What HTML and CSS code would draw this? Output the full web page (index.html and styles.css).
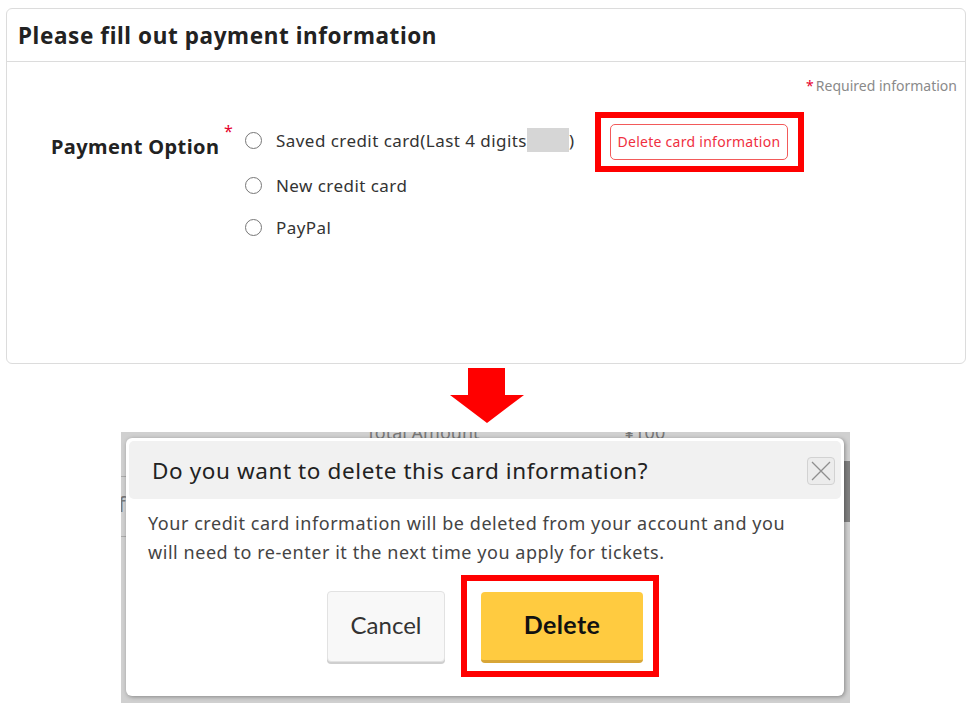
FILE: index.html
```html
<!DOCTYPE html>
<html lang="en">
<head>
<meta charset="utf-8">
<title>Payment information</title>
<link rel="stylesheet" href="styles.css">
</head>
<body>
<section class="card">
  <header class="card-head">Please fill out payment information</header>
  <div class="card-body">
    <p class="required"><span class="req-mark">*</span>Required information</p>
    <div class="field">
      <div class="field-label">Payment Option<span class="label-mark">*</span></div>
      <div class="options">
        <div class="option option-first">
          <span class="radio"></span>
          <span class="option-text">Saved credit card(Last 4 digits<span class="masked"></span>)</span>
          <span class="highlight highlight-small"><button class="btn-delete-card">Delete card information</button></span>
        </div>
        <div class="option option-second">
          <span class="radio"></span>
          <span class="option-text">New credit card</span>
        </div>
        <div class="option">
          <span class="radio"></span>
          <span class="option-text">PayPal</span>
        </div>
      </div>
    </div>
  </div>
</section>

<div class="arrow-wrap">
  <svg class="arrow" width="74" height="55" viewBox="0 0 74 55"><polygon points="18,0 55,0 55,27 74,27 37,55 0,27 18,27" fill="#ff0000"/></svg>
</div>

<div class="shot">
  <div class="bg-text bg-total">Total Amount</div>
  <div class="bg-text bg-amount">¥100</div>
  <div class="bg-line bg-line-1"></div>
  <div class="bg-line bg-line-2"></div>
  <div class="bg-letter">f</div>
  <div class="bg-scroll"></div>
  <div class="modal">
    <div class="modal-head">
      <h2 class="modal-title">Do you want to delete this card information?</h2>
      <span class="modal-close"><svg width="22" height="22" viewBox="0 0 22 22"><path d="M2 2 L20 20 M20 2 L2 20" stroke="#8f8f8f" stroke-width="1.3" fill="none"/></svg></span>
    </div>
    <p class="modal-text">Your credit card information will be deleted from your account and you will need to re-enter it the next time you apply for tickets.</p>
    <div class="modal-actions">
      <button class="btn btn-cancel">Cancel</button>
      <span class="highlight highlight-big"><button class="btn btn-delete">Delete</button></span>
    </div>
  </div>
</div>
</body>
</html>
```

FILE: styles.css
```css
* { box-sizing: border-box; }
html, body { margin: 0; padding: 0; background: #fff; }
body {
  font-family: "Noto Sans", "DejaVu Sans", sans-serif;
  color: #333;
  width: 972px;
  height: 703px;
  overflow: hidden;
}

.card {
  margin: 8px 6px 0;
  height: 356px;
  border: 1px solid #dcdcdc;
  border-radius: 6px;
}
.card-head {
  height: 53px;
  display: flex;
  align-items: center;
  padding-left: 11px;
  font-size: 22.5px;
  letter-spacing: 0.6px;
  font-weight: 700;
  color: #222;
  border-bottom: 1px solid #dcdcdc;
}
.card-body { padding: 14px 8px 0 44px; }
.required {
  margin: 0;
  text-align: right;
  font-size: 14px;
  color: #8a8a8a;
  line-height: 20px;
}
.req-mark { color: #e6002d; margin-right: 2px; }

.field { display: flex; margin-top: 26px; }
.field-label {
  position: relative;
  width: 194px;
  padding-top: 11px;
  font-size: 20px;
  letter-spacing: 0.4px;
  font-weight: 700;
  color: #222;
}
.label-mark {
  position: absolute;
  left: 173px;
  top: -2px;
  color: #e6002d;
  font-size: 16px;
  font-weight: 400;
}
.options { display: flex; flex-direction: column; }
.option {
  display: flex;
  align-items: center;
  height: 36px;
  font-size: 17px;
  letter-spacing: 0.45px;
  color: #333;
}
.option-first { margin-bottom: 9px; }
.option-second { margin-bottom: 6px; }
.radio {
  width: 17px;
  height: 17px;
  border: 1.5px solid #777;
  border-radius: 50%;
  margin-right: 14px;
  flex-shrink: 0;
}
.masked {
  display: inline-block;
  width: 42px;
  height: 24px;
  background: #d6d6d6;
  vertical-align: -5px;
}
.highlight {
  display: inline-block;
  outline: 6px solid #ff0000;
}
.highlight-small {
  margin: 3px 0 0 26px;
  padding: 6px 10px 6px 9px;
}
.btn-delete-card {
  display: block;
  height: 36px;
  padding: 0 7px;
  border: 1px solid #f25a5a;
  border-radius: 5px;
  background: #fff;
  color: #f0303f;
  font-family: inherit;
  font-size: 14px;
  letter-spacing: 0.27px;
}

.arrow-wrap {
  display: flex;
  justify-content: center;
  margin-top: 4px;
  height: 55px;
}
.arrow { display: block; margin-left: 1px; }

.shot {
  position: relative;
  margin: 9px 0 0 121px;
  width: 729px;
  height: 280px;
  background: #d0d0d0;
  padding: 6px 0 0 5px;
  overflow: hidden;
}
.bg-text {
  position: absolute;
  top: -12px;
  font-size: 18px;
  color: #777;
}
.bg-total { left: 245px; }
.bg-amount { left: 503px; }
.bg-line { position: absolute; left: 0; width: 8px; height: 1px; background: #aaa; }
.bg-line-1 { top: 44px; }
.bg-line-2 { top: 104px; }
.bg-letter { position: absolute; left: -3px; top: 56px; font-size: 22px; color: #777; }
.bg-scroll { position: absolute; right: 0; top: 29px; width: 6px; height: 61px; background: #808080; }

.modal {
  position: relative;
  width: 718px;
  height: 258px;
  background: #fff;
  border-radius: 6px;
  box-shadow: 1px 1px 4px rgba(0,0,0,0.35);
  padding: 3px;
}
.modal-head {
  height: 58px;
  background: #f1f1f1;
  border-radius: 5px;
  display: flex;
  align-items: center;
  justify-content: space-between;
  padding: 0 6px 0 23px;
}
.modal-title {
  margin: 0;
  font-size: 22.5px;
  letter-spacing: 0.6px;
  font-weight: 400;
  color: #222;
}
.modal-close {
  width: 28px;
  height: 28px;
  border: 1px solid #d2d2d2;
  border-radius: 4px;
  background: #ececec;
  display: flex;
  align-items: center;
  justify-content: center;
  margin-top: 2px;
}
.modal-text {
  margin: 10px 0 0 19px;
  width: 650px;
  font-size: 18px;
  letter-spacing: 0.55px;
  line-height: 29px;
  color: #444;
}
.modal-actions {
  display: flex;
  align-items: flex-start;
  margin: 14px 0 0 198px;
}
.btn {
  height: 71px;
  padding: 0 0 4px;
  border-radius: 4px;
  font-family: "Lato", "Noto Sans", sans-serif;
  font-size: 24px;
  cursor: pointer;
}
.btn-cancel {
  width: 118px;
  margin-top: 10px;
  background: #f8f8f8;
  border: 1px solid #e2e2e2;
  box-shadow: 0 2px 0 #cfcfcf;
  color: #333;
}
.highlight-big {
  margin-left: 22px;
  padding: 11px 10px 8px 14px;
}
.btn-delete {
  width: 162px;
  background: #ffcb40;
  border: none;
  border-bottom: 3px solid #d8a636;
  color: #111;
  font-weight: 700;
  font-size: 25px;
  letter-spacing: 0.4px;
}
```
